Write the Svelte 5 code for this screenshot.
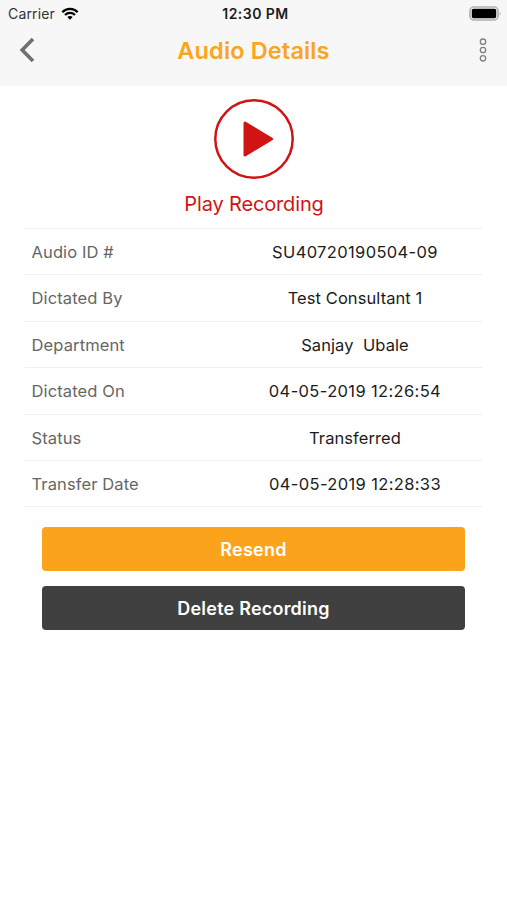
<script>
  //rows shown in the details list
  const details = [
    { label: 'Audio ID #', value: 'SU40720190504-09', numeric: true },
    { label: 'Dictated By', value: 'Test Consultant 1' },
    { label: 'Department', value: 'Sanjay  Ubale' },
    { label: 'Dictated On', value: '04-05-2019 12:26:54', numeric: true },
    { label: 'Status', value: 'Transferred' },
    { label: 'Transfer Date', value: '04-05-2019 12:28:33', numeric: true }
  ];
</script>

<div class="screen">
  <header>
    <div class="status-bar">
      <div class="carrier">
        <span>Carrier</span>
        <svg class="wifi" width="18" height="13" viewBox="0 0 18 13" aria-hidden="true">
          <path d="M1.3 5.2C5.6 0.8 12.4 0.8 16.7 5.2" />
          <path d="M4 8C6.8 5.2 11.2 5.2 14 8" />
          <path class="dot" d="M6.3 10.1Q9 7.7 11.7 10.1L9 12.8Z" />
        </svg>
      </div>
      <span class="time">12:30 PM</span>
      <svg class="battery" width="33" height="16" viewBox="0 0 33 16" aria-hidden="true">
        <rect x="1" y="1" width="28" height="13" rx="4" fill="#f7f7f7" stroke="#b0b0b0" stroke-width="1.6" />
        <rect x="2.8" y="2.8" width="24.4" height="9.4" rx="1.6" fill="#000" />
        <path d="M30.6 5.4Q32.6 7.5 30.6 9.6Z" fill="#a9a9a9" />
      </svg>
    </div>
    <div class="nav-bar">
      <button class="icon-button" aria-label="Back">
        <svg width="16" height="26" viewBox="0 0 16 26">
          <path d="M14 2L3.2 13L14 24" fill="none" stroke="#707070" stroke-width="3.6" />
        </svg>
      </button>
      <h1>Audio Details</h1>
      <button class="icon-button" aria-label="More">
        <svg width="16" height="26" viewBox="0 0 16 26" fill="none" stroke="#808080" stroke-width="1.3">
          <circle cx="12" cy="4.7" r="2.7" />
          <circle cx="12" cy="13" r="2.7" />
          <circle cx="12" cy="21.3" r="2.7" />
        </svg>
      </button>
    </div>
  </header>

  <main>
    <button class="play">
      <svg width="80" height="80" viewBox="0 0 80 80" aria-hidden="true">
        <circle cx="40" cy="40" r="38.7" fill="none" stroke="#d01414" stroke-width="2.5" />
        <path d="M31 24L57.5 40L31 56Z" fill="#d01414" stroke="#d01414" stroke-width="3" stroke-linejoin="round" />
      </svg>
      <span>Play Recording</span>
    </button>

    <dl>
      {#each details as row}
        <div class="row">
          <dt>{row.label}</dt>
          <dd class:numeric={row.numeric}>{row.value}</dd>
        </div>
      {/each}
    </dl>

    <div class="actions">
      <button class="resend">Resend</button>
      <button class="delete">Delete Recording</button>
    </div>
  </main>
</div>

<style>
  :global(body) {
    background: #fff;
  }

  .screen {
    min-height: 900px;
    font-family: Inter, "Liberation Sans", sans-serif;
    color: #1c1c1c;
  }

  button {
    padding: 0;
    border: 0;
    background: none;
    font-family: inherit;
    cursor: pointer;
  }

  svg {
    display: block;
  }

  header {
    height: 86px;
    background: #f7f7f7;
  }

  .status-bar {
    display: grid;
    grid-template-columns: 1fr auto 1fr;
    align-items: center;
    height: 27px;
    padding: 0 5px 0 8px;
    font-size: 14px;
  }

  .carrier {
    display: flex;
    align-items: center;
    gap: 6px;
    color: #333;
    letter-spacing: 0.15px;
  }

  .wifi {
    fill: none;
    stroke: #000;
    stroke-width: 2.2;
  }

  .wifi .dot {
    fill: #000;
    stroke: none;
  }

  .time {
    padding-left: 1px;
    font-weight: 600;
    letter-spacing: 0.45px;
  }

  .battery {
    justify-self: end;
  }

  .nav-bar {
    display: flex;
    align-items: center;
    justify-content: space-between;
    height: 46px;
    padding: 0 20px 0 19px;
  }

  h1 {
    margin: 1px 0 0;
    padding-left: 1px;
    color: #f9a522;
    font-size: 23.5px;
    font-weight: 600;
    letter-spacing: 0.14px;
    line-height: 30px;
  }

  main {
    display: flex;
    flex-direction: column;
    align-items: center;
    padding: 13px 0 0 1px;
  }

  .play {
    display: flex;
    flex-direction: column;
    align-items: center;
    gap: 12px;
    color: #d01414;
    font-size: 20px;
    letter-spacing: -0.15px;
    line-height: 26px;
  }

  dl {
    width: 457px;
    margin: 11px 1px 0 0;
    border-top: 1px solid #efefef;
  }

  .row {
    display: grid;
    grid-template-columns: 202px 1fr;
    align-items: center;
    box-sizing: border-box;
    height: 46.4px;
    padding: 0.6px 0 0 6.5px;
    border-bottom: 1px solid #efefef;
    font-size: 16.5px;
  }

  dt {
    color: #666;
    letter-spacing: 0.12px;
  }

  dd {
    margin: 0;
    padding-right: 5.5px;
    text-align: center;
    white-space: pre;
    letter-spacing: 0.08px;
  }

  .numeric {
    letter-spacing: 0.36px;
  }

  .actions {
    display: flex;
    flex-direction: column;
    gap: 15px;
    width: 423px;
    margin: 20px 1px 0 0;
  }

  .actions button {
    height: 44px;
    border-radius: 4px;
    color: #fff;
    font-size: 18px;
    font-weight: 600;
    letter-spacing: 0.22px;
  }

  .actions .resend {
    background: #fba31a;
  }

  .actions .delete {
    background: #404040;
  }
</style>
